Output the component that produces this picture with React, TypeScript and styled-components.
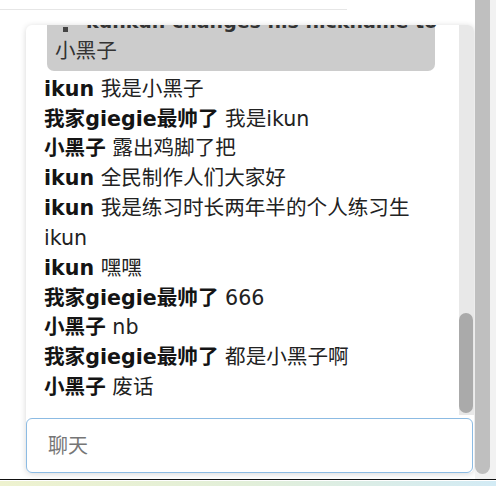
import React, { useLayoutEffect, useRef } from "react";
import styled, { createGlobalStyle } from "styled-components";

const Global = createGlobalStyle`
  html, body { margin: 0; padding: 0; background: #ffffff; }
  body { font-family: "DejaVu Sans", "Noto Sans CJK SC", sans-serif; }
  * { box-sizing: border-box; }
`;

const Page = styled.div`
  width: 496px;
  height: 486px;
  display: flex;
  flex-direction: column;
  overflow: hidden;
`;

const Main = styled.div`
  height: 479px;
  display: flex;
  flex-direction: row;
`;

const Content = styled.div`
  width: 475px;
  display: flex;
  flex-direction: column;
`;

const TopRule = styled.div`
  margin-top: 9px;
  width: 347px;
  height: 1px;
  flex-shrink: 0;
  background: #e6e6e6;
`;

const Panel = styled.section`
  margin: 15px 0 0 26px;
  width: 448px;
  height: 448px;
  flex-shrink: 0;
  display: flex;
  flex-direction: column;
  background: #ffffff;
  border-radius: 6px;
  box-shadow: 0 1px 6px rgba(0, 0, 0, 0.16);
`;

const MessageArea = styled.div`
  height: 390px;
  flex-shrink: 0;
  display: flex;
  flex-direction: row;
  overflow: hidden;
  border-radius: 6px 6px 0 0;
`;

const MessageList = styled.div`
  flex: 1;
  height: 390px;
  overflow: hidden;
  padding: 0 0 12.5px 18px;
  font-family: "DejaVu Sans", "Noto Sans CJK SC", sans-serif;
  font-size: 20.6px;
  line-height: 29.85px;
`;

const Notice = styled.div`
  margin: 0 24px 4px 3px;
  padding: 0 8px 4px 8px;
  background: #cccccc;
  border-radius: 0 0 7px 7px;
  color: #333333;
`;

const NoticeLine = styled.div`
  white-space: nowrap;
  font-weight: 700;
  font-size: 19px;
`;

const Bullet = styled.span`
  display: inline-block;
  width: 5px;
  height: 5px;
  margin: 0 18px 0 8px;
  background: #444;
  vertical-align: -4px;
`;

const NoticeName = styled.div`
  font-weight: 400;
`;

const Row = styled.div`
  white-space: nowrap;
  color: #222222;
`;

const Name = styled.span`
  font-weight: 700;
  color: #141414;
`;

const InnerTrack = styled.div`
  width: 15px;
  background: #e8e8e8;
  display: flex;
  flex-direction: column;
  justify-content: flex-end;
  padding-bottom: 2px;
`;

const InnerThumb = styled.div`
  height: 100px;
  width: 14px;
  background: #aaaaaa;
  border-radius: 7px;
`;

const InputBox = styled.input`
  margin-top: 3px;
  width: 447px;
  height: 55px;
  flex-shrink: 0;
  border: 1px solid #8cbbe3;
  border-radius: 6px;
  padding: 0 0 0 21px;
  font-family: "DejaVu Sans", "Noto Sans CJK SC", sans-serif;
  font-size: 20px;
  color: #222;
  caret-color: #000;
  outline: none;
  background: #fff;
  &::placeholder { color: #767676; }
`;

const OuterScroll = styled.div`
  flex: 1;
  display: flex;
  flex-direction: row;
  background: #f2f2f2;
`;

const OuterThumb = styled.div`
  width: 15px;
  height: 474px;
  background: #bfbfbf;
  border-radius: 0 0 8px 8px;
`;

const BottomRule = styled.div`
  height: 1px;
  flex-shrink: 0;
  background: #111;
`;

const Strip = styled.div`
  flex: 1;
  margin-top: 1px;
  background: linear-gradient(90deg, #eef2cf 0%, #e2efd9 50%, #d3ebf5 100%);
`;

type Msg = { name: string; text: string };

const messages: Msg[] = [
  { name: "ikun", text: "我是小黑子" },
  { name: "我家giegie最帅了", text: "我是ikun" },
  { name: "小黑子", text: "露出鸡脚了把" },
  { name: "ikun", text: "全民制作人们大家好" },
  { name: "ikun", text: "我是练习时长两年半的个人练习生" },
  { name: "ikun", text: "" },
  { name: "ikun", text: "嘿嘿" },
  { name: "我家giegie最帅了", text: "666" },
  { name: "小黑子", text: "nb" },
  { name: "我家giegie最帅了", text: "都是小黑子啊" },
  { name: "小黑子", text: "废话" },
];

export default function App() {
  const listRef = useRef<HTMLDivElement>(null);
  useLayoutEffect(() => {
    const el = listRef.current;
    if (el) el.scrollTop = el.scrollHeight;
  }, []);

  return (
    <Page>
      <Global />
      <Main>
        <Content>
          <TopRule />
          <Panel>
            <MessageArea>
              <MessageList ref={listRef}>
                <Notice>
                  <NoticeLine>
                    <Bullet />
                    kunkun changes his nickname to
                  </NoticeLine>
                  <NoticeName>小黑子</NoticeName>
                </Notice>
                {messages.map((m, i) => (
                  <Row key={i}>
                    {m.text === "" ? (
                      m.name
                    ) : (
                      <>
                        <Name>{m.name}</Name> {m.text}
                      </>
                    )}
                  </Row>
                ))}
              </MessageList>
              <InnerTrack>
                <InnerThumb />
              </InnerTrack>
            </MessageArea>
            <InputBox placeholder="聊天" autoFocus />
          </Panel>
        </Content>
        <OuterScroll>
          <OuterThumb />
        </OuterScroll>
      </Main>
      <BottomRule />
      <Strip />
    </Page>
  );
}
